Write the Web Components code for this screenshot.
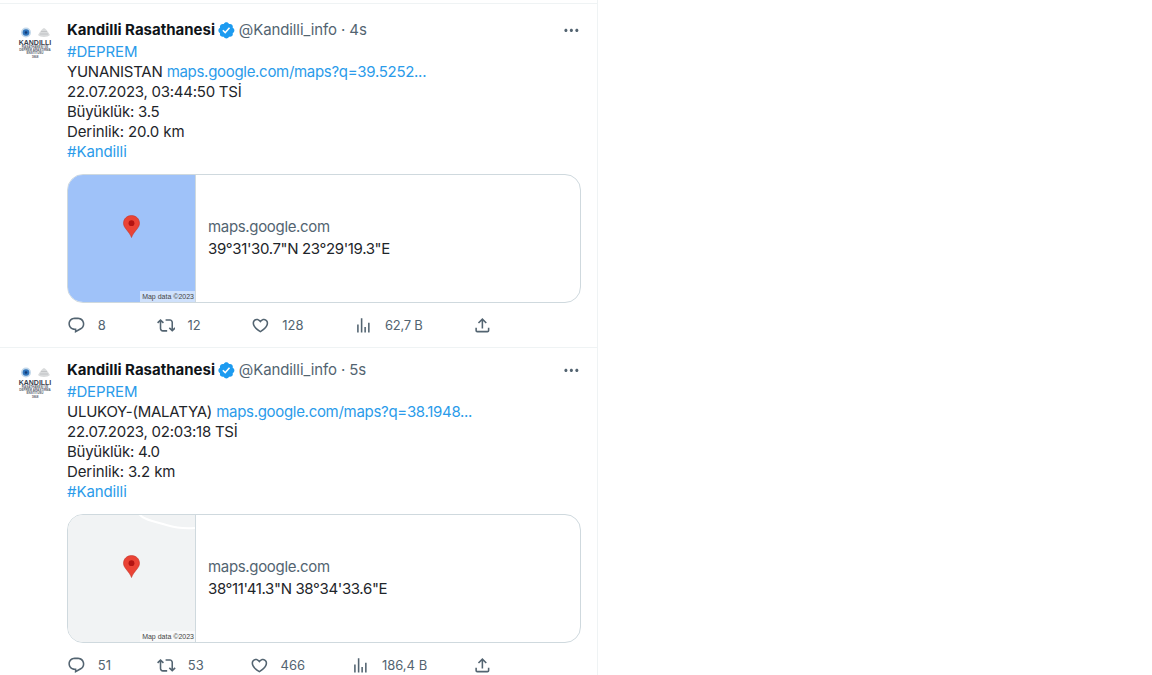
<!DOCTYPE html>
<html lang="tr">
<head>
<meta charset="utf-8">
<title>Kandilli Rasathanesi</title>
<style>
  html, body { margin: 0; height: 100%; background: #fff; overflow: hidden; }
  body { font-family: Inter, Roboto, "Liberation Sans", sans-serif; color: #1e252a; }
  a { color: #2a9bea; text-decoration: none; }
  .url { letter-spacing: -.3px; }
  .tight { letter-spacing: -.25px; }
</style>
</head>
<body>
<template id="tweet-tpl">
  <style>
    :host {
      display: grid;
      grid-template-columns: 40px 1fr;
      column-gap: 12px;
      padding: var(--tweet-top, 12px) 16px 12px 15px;
      border-bottom: 1px solid #eff3f4;
      font-size: 15px;
      line-height: 20px;
    }
    header { display: flex; align-items: center; height: 20px; margin-bottom: 2px; white-space: nowrap; }
    .name { font-weight: 700; color: #0f1419; }
    .badge { width: 18.75px; height: 18.75px; margin: 0 3px 0 2px; fill: #1d9bf0; flex: none; }
    .meta { color: #536471; letter-spacing: -.1px; }
    .more { width: 18.75px; height: 18.75px; margin-left: auto; fill: #536471; }
    .text { letter-spacing: -.1px; }
    .card { margin-top: 12px; }
    .side { padding-top: 6px; }
    footer { display: flex; justify-content: space-between; max-width: 425px; margin-top: 12px; height: 20px; }
  </style>
  <div class="side"><tw-avatar></tw-avatar></div>
  <div>
    <header>
      <span class="name"></span>
      <svg class="badge" viewBox="0 0 24 24"><path d="M22.25 12c0-1.43-.88-2.67-2.19-3.34.46-1.39.2-2.9-.81-3.91s-2.52-1.27-3.91-.81c-.66-1.31-1.91-2.19-3.34-2.19s-2.67.88-3.33 2.19c-1.4-.46-2.91-.2-3.92.81s-1.26 2.52-.8 3.91c-1.31.67-2.2 1.91-2.2 3.34s.89 2.67 2.2 3.34c-.46 1.39-.21 2.9.8 3.91s2.52 1.26 3.91.81c.67 1.31 1.91 2.19 3.34 2.19s2.68-.88 3.34-2.19c1.39.45 2.9.2 3.91-.81s1.27-2.52.81-3.91c1.31-.67 2.19-1.91 2.19-3.34zm-11.71 4.2L6.8 12.46l1.41-1.42 2.26 2.26 4.8-5.23 1.47 1.36-6.2 6.77z"/></svg>
      <span class="meta"></span>
      <svg class="more" viewBox="0 0 24 24"><path d="M3 12c0-1.1.9-2 2-2s2 .9 2 2-.9 2-2 2-2-.9-2-2zm9 2c1.1 0 2-.9 2-2s-.9-2-2-2-2 .9-2 2 .9 2 2 2zm7 0c1.1 0 2-.9 2-2s-.9-2-2-2-2 .9-2 2 .9 2 2 2z"/></svg>
    </header>
    <div class="text"><slot></slot></div>
    <div class="card"><slot name="card"></slot></div>
    <footer><slot name="actions"></slot></footer>
  </div>
</template>

<template id="avatar-tpl">
  <style>
    :host { display: block; width: 40px; height: 40px; text-align: center; color: #39414e; font-family: "Liberation Sans", sans-serif; line-height: 1; overflow: hidden; }
    svg { display: block; margin: 0 auto; width: 34px; height: 13px; }
    b { display: block; font-size: 7px; margin-top: 0; }
    i { display: block; font-style: normal; font-weight: 700; font-size: 3px; line-height: 3px; color: #59616e; white-space: nowrap; }
  </style>
  <svg viewBox="0 0 34 13">
    <circle cx="8" cy="6.500" r="5" fill="#c3d8ea"/>
    <circle cx="8" cy="6.500" r="3.300" fill="#2f74bb"/>
    <circle cx="8" cy="6.500" r="1.300" fill="#123a74"/>
    <path d="M20 9c1-1 2.500-5 6-7 3.500 2 5 6 6 7-2 2.500-10 2.500-12 0z" fill="#d9dbdc"/>
    <path d="M22 8h8M23 5.500h6" stroke="#b4b7b9" stroke-width=".6" fill="none"/>
  </svg>
  <b>KANDILLI</b>
  <i>RASATHANESİ VE</i>
  <i>DEPREM ARAŞTIRMA</i>
  <i>ENSTİTÜSÜ</i>
  <i style="margin-top:1px">1868</i>
</template>

<template id="card-tpl">
  <style>
    :host { display: flex; height: 127px; border: 1px solid #cfd9de; border-radius: 16px; overflow: hidden; }
    .map { position: relative; flex: none; width: 127px; border-right: 1px solid #cfd9de; background: var(--map-color, #f1f3f4); overflow: hidden; }
    .pin { position: absolute; left: 55px; top: 40px; width: 17px; height: 23px; }
    .credit { position: absolute; right: 0; bottom: 0; padding: 0 1px 0 2px; height: 11px; background: rgba(255,255,255,.5); font: 7px/11px "Liberation Sans", sans-serif; color: #444; white-space: nowrap; }
    .info { flex: 1; display: flex; flex-direction: column; justify-content: center; gap: 2px; padding: 0 12px 2px; font-size: 15px; line-height: 20px; }
    .domain { color: #536471; letter-spacing: -.33px; }
    .title { color: #1e252a; letter-spacing: -.36px; }
  </style>
  <div class="map">
    <slot name="road"></slot>
    <svg class="pin" viewBox="0 0 17 23">
      <path d="M8.500.5C4 .5.500 3.900.500 8.200c0 2.200 1 3.800 2.500 5.800 2.300 2.900 4.500 5.500 5.500 8.500 1-3 3.200-5.600 5.500-8.500 1.500-2 2.500-3.600 2.500-5.800C16.500 3.900 13 .5 8.500.5z" fill="#ea4335" stroke="#c5372c" stroke-width=".6"/>
      <circle cx="8.500" cy="8.200" r="2.900" fill="#b31412"/>
    </svg>
    <span class="credit">Map data ©2023</span>
  </div>
  <div class="info">
    <span class="domain">maps.google.com</span>
    <span class="title"><slot></slot></span>
  </div>
</template>

<template id="action-tpl">
  <style>
    :host { display: flex; align-items: center; gap: 12px; height: 20px; color: #536471; font-size: 13px; line-height: 16px; white-space: nowrap; }
    svg { width: 18.75px; height: 18.75px; fill: #536471; flex: none; }
  </style>
  <svg viewBox="0 0 24 24"><path></path></svg>
  <slot></slot>
</template>

<script>
  const ICONS = {
    reply: 'M1.751 10c0-4.42 3.584-8 8.005-8h4.366c4.49 0 8.129 3.64 8.129 8.13 0 2.96-1.607 5.68-4.196 7.11l-8.054 4.46v-3.69h-.067c-4.49.1-8.183-3.51-8.183-8.01zm8.005-6c-3.317 0-6.005 2.69-6.005 6 0 3.37 2.77 6.08 6.138 6.01l.351-.01h1.761v2.3l5.087-2.81c1.951-1.08 3.163-3.13 3.163-5.36 0-3.39-2.744-6.13-6.129-6.13H9.756z',
    retweet: 'M4.5 3.88l4.432 4.14-1.364 1.46L5.5 7.55V16c0 1.1.896 2 2 2H13v2H7.5c-2.209 0-4-1.79-4-4V7.55L1.432 9.48.068 8.02 4.5 3.88zM16.5 6H11V4h5.5c2.209 0 4 1.79 4 4v8.45l2.068-1.93 1.364 1.46-4.432 4.14-4.432-4.14 1.364-1.46 2.068 1.93V8c0-1.1-.896-2-2-2z',
    like: 'M16.697 5.5c-1.222-.06-2.679.51-3.89 2.16l-.805 1.09-.806-1.09C9.984 6.01 8.526 5.44 7.304 5.5c-1.243.07-2.349.78-2.91 1.91-.552 1.12-.633 2.78.479 4.82 1.074 1.97 3.257 4.27 7.129 6.61 3.87-2.34 6.052-4.64 7.126-6.61 1.111-2.04 1.03-3.7.477-4.82-.561-1.13-1.666-1.84-2.908-1.91zm4.187 7.69c-1.351 2.48-4.001 5.12-8.379 7.67l-.503.3-.504-.3c-4.379-2.55-7.029-5.19-8.382-7.67-1.36-2.5-1.41-4.86-.514-6.67.887-1.79 2.647-2.91 4.601-3.01 1.651-.09 3.368.56 4.798 2.01 1.429-1.45 3.146-2.1 4.796-2.01 1.954.1 3.714 1.22 4.601 3.01.896 1.81.846 4.17-.514 6.67z',
    views: 'M8.75 21V3h2v18h-2zM18 21V8.500h2V21h-2zM4 21l.004-10h2L6 21H4zm9.248 0v-7h2v7h-2z',
    share: 'M12 2.590l5.700 5.700-1.410 1.420L13 6.410V16h-2V6.410l-3.300 3.300-1.410-1.420L12 2.590zM21 15l-.02 3.510c0 1.380-1.120 2.490-2.500 2.490H5.500C4.110 21 3 19.880 3 18.500V15h2v3.500c0 .28.220.5.5.5h12.980c.28 0 .5-.22.5-.5L19 15h2z'
  };

  function fromTemplate(el, id) {
    el.attachShadow({ mode: 'open' }).appendChild(document.getElementById(id).content.cloneNode(true));
  }

  customElements.define('tw-avatar', class extends HTMLElement {
    constructor() {
      super();
      fromTemplate(this, 'avatar-tpl');
    }
  });

  customElements.define('tw-tweet', class extends HTMLElement {
    constructor() {
      super();
      fromTemplate(this, 'tweet-tpl');
    }

    connectedCallback() {
      this.shadowRoot.querySelector('.name').textContent = this.getAttribute('name');
      this.shadowRoot.querySelector('.meta').textContent = this.getAttribute('meta');
    }
  });

  customElements.define('tw-map-card', class extends HTMLElement {
    constructor() {
      super();
      fromTemplate(this, 'card-tpl');
    }

    connectedCallback() {
      this.style.setProperty('--map-color', this.getAttribute('map-color'));
    }
  });

  customElements.define('tw-action', class extends HTMLElement {
    constructor() {
      super();
      fromTemplate(this, 'action-tpl');
    }

    connectedCallback() {
      this.shadowRoot.querySelector('path').setAttribute('d', ICONS[this.getAttribute('icon')]);
    }
  });

  customElements.define('tw-timeline', class extends HTMLElement {
    constructor() {
      super();
      this.attachShadow({ mode: 'open' }).innerHTML = `
        <style>
          :host {
            display: block;
            box-sizing: border-box;
            width: 598px;
            height: 100%;
            padding-top: 3px;
            border-right: 1px solid #eff3f4;
          }
          section { border-top: 1px solid #eff3f4; }
        </style>
        <section><slot></slot></section>
      `;
    }
  });
</script>

<tw-timeline>
  <tw-tweet name="Kandilli Rasathanesi" meta="@Kandilli_info · 4s" style="--tweet-top: 16px">
    <a href="#">#DEPREM</a><br>
    <span class="tight">YUNANISTAN</span> <a class="url" href="#">maps.google.com/maps?q=39.5252...</a><br>
    <span class="tight">22.07.2023, 03:44:50 TSİ</span><br>
    <span class="tight">Büyüklük: 3.5</span><br>
    Derinlik: 20.0 km<br>
    <a href="#">#Kandilli</a>
    <tw-map-card slot="card" map-color="#9fc2f9">39°31'30.7"N 23°29'19.3"E</tw-map-card>
    <tw-action slot="actions" icon="reply">8</tw-action>
    <tw-action slot="actions" icon="retweet">12</tw-action>
    <tw-action slot="actions" icon="like">128</tw-action>
    <tw-action slot="actions" icon="views" style="letter-spacing:-.3px">62,7 B</tw-action>
    <tw-action slot="actions" icon="share"></tw-action>
  </tw-tweet>
  <tw-tweet name="Kandilli Rasathanesi" meta="@Kandilli_info · 5s">
    <a href="#">#DEPREM</a><br>
    <span class="tight">ULUKOY-(MALATYA)</span> <a class="url" href="#">maps.google.com/maps?q=38.1948...</a><br>
    <span class="tight">22.07.2023, 02:03:18 TSİ</span><br>
    <span class="tight">Büyüklük: 4.0</span><br>
    Derinlik: 3.2 km<br>
    <a href="#">#Kandilli</a>
    <tw-map-card slot="card" map-color="#f1f3f4">
      <svg slot="road" viewBox="0 0 127 127" width="127" height="127" style="position:absolute;left:0;top:0"><path d="M71-1c5 6 14 7 24 10 10 3 18 5 32 4" fill="none" stroke="#fff" stroke-width="2"/></svg>
      38°11'41.3"N 38°34'33.6"E
    </tw-map-card>
    <tw-action slot="actions" icon="reply">51</tw-action>
    <tw-action slot="actions" icon="retweet">53</tw-action>
    <tw-action slot="actions" icon="like">466</tw-action>
    <tw-action slot="actions" icon="views">186,4 B</tw-action>
    <tw-action slot="actions" icon="share"></tw-action>
  </tw-tweet>
</tw-timeline>
</body>
</html>
